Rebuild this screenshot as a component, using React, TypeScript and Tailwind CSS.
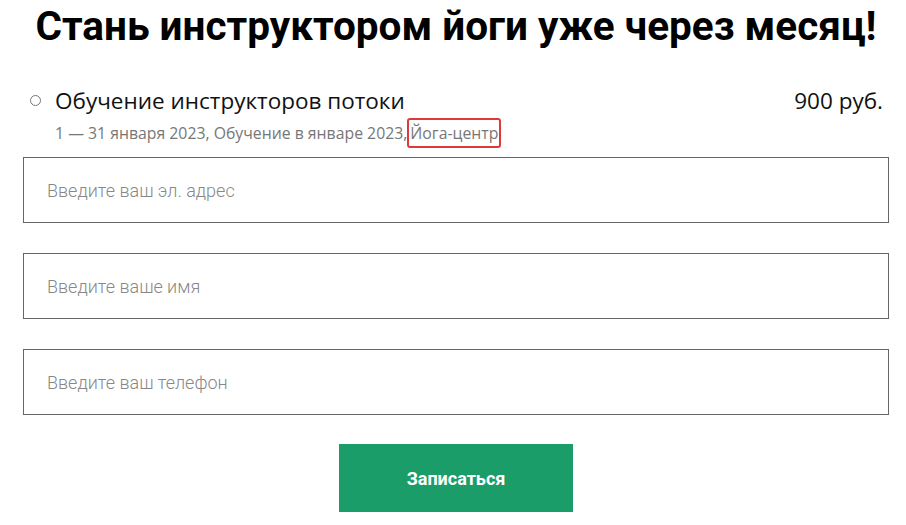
import React from "react";

const fields = ["Введите ваш эл. адрес", "Введите ваше имя", "Введите ваш телефон"];

export default function App() {
  return (
    <div className="min-h-screen bg-white font-['Roboto',sans-serif]">
      <div className="ml-[23px] w-[866px]">
        <h1 className="pt-[1px] text-center text-[40.5px] font-bold leading-[50px] text-black">
          Стань инструктором йоги уже через месяц!
        </h1>

        <div className="mt-[36px] flex items-start font-['Open_Sans',sans-serif]">
          <span className="ml-[7px] mt-[8px] h-[11px] w-[11px] shrink-0 rounded-full border border-[#777]" />
          <div className="ml-[14px] flex-1">
            <div className="flex items-baseline justify-between">
              <span className="text-[22.5px] leading-[28px] text-[#111]">Обучение инструкторов потоки</span>
              <span className="mr-[6px] text-[22.5px] leading-[28px] text-[#111]">900 руб.</span>
            </div>
            <div className="pt-[3px] text-[15.8px] leading-[30px] text-[#777]">
              1 — 31 января 2023, Обучение в январе 2023,
              <span className="rounded-[3px] border-2 border-[#e0393b] px-[1px] py-[2px]">Йога-центр</span>
            </div>
          </div>
        </div>

        <form className="mt-[9px] flex flex-col gap-[30px]" onSubmit={(e) => e.preventDefault()}>
          {fields.map((f) => (
            <input
              key={f}
              placeholder={f}
              className="h-[66px] w-full border border-[#666] px-[23px] text-[18px] font-light text-[#333] outline-none placeholder:text-[#888]"
            />
          ))}
          <div className="flex justify-center">
            <button className="-mt-[1px] h-[68px] w-[234px] bg-[#1b9d6a] text-[18px] font-bold text-white">
              Записаться
            </button>
          </div>
        </form>
      </div>
    </div>
  );
}
